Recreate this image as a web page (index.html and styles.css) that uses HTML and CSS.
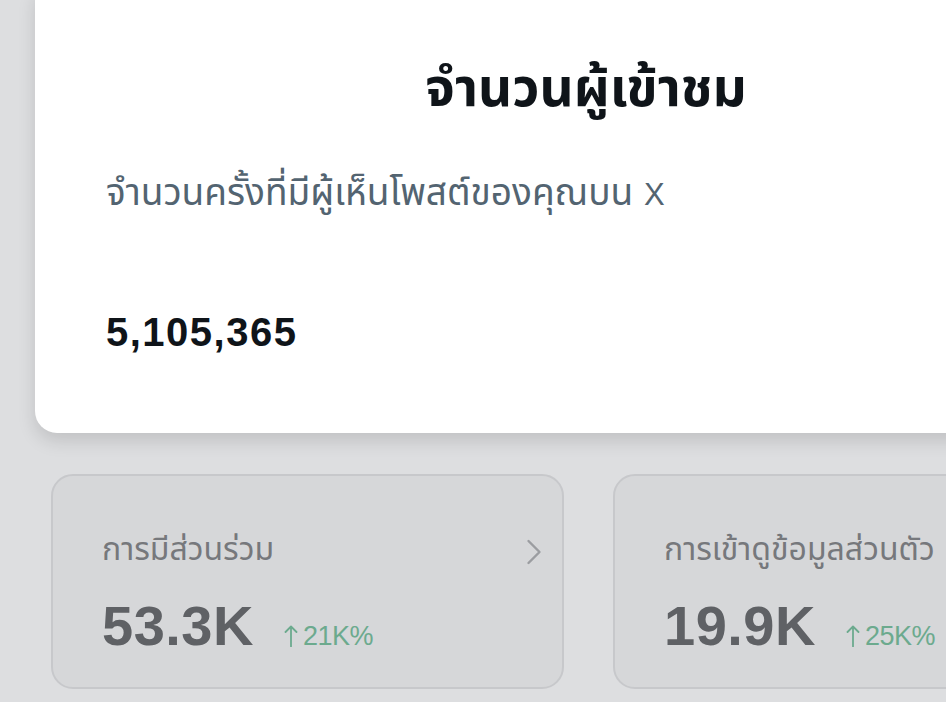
FILE: index.html
```html
<!DOCTYPE html>
<html lang="th">
<head>
<meta charset="utf-8">
<link rel="stylesheet" href="styles.css">
</head>
<body>
<div class="page">
  <section class="hero">
    <h1 class="hero-title">จำนวนผู้เข้าชม</h1>
    <p class="hero-sub">จำนวนครั้งที่มีผู้เห็นโพสต์ของคุณบน <span class="latin">X</span></p>
    <div class="hero-num">5,105,365</div>
  </section>
  <div class="stats">
    <div class="stat">
      <div class="stat-head">
        <span class="stat-label">การมีส่วนร่วม</span>
        <svg class="chev" width="16" height="26" viewBox="0 0 16 26"><path d="M2.5 2 L13.5 13 L2.5 24" fill="none" stroke="#9b9da1" stroke-width="2.4" stroke-linecap="round" stroke-linejoin="round"/></svg>
      </div>
      <div class="stat-row">
        <span class="stat-value">53.3K</span>
        <span class="stat-delta"><svg class="arrow" width="14" height="22" viewBox="0 0 14 22"><path d="M7 21.5 L7 1.5 M1.5 7 L7 1.5 L12.5 7" fill="none" stroke="#6caa8e" stroke-width="1.8" stroke-linecap="round" stroke-linejoin="round"/></svg>21K%</span>
      </div>
    </div>
    <div class="stat">
      <div class="stat-head">
        <span class="stat-label">การเข้าดูข้อมูลส่วนตัว</span>
      </div>
      <div class="stat-row">
        <span class="stat-value">19.9K</span>
        <span class="stat-delta"><svg class="arrow" width="14" height="22" viewBox="0 0 14 22"><path d="M7 21.5 L7 1.5 M1.5 7 L7 1.5 L12.5 7" fill="none" stroke="#6caa8e" stroke-width="1.8" stroke-linecap="round" stroke-linejoin="round"/></svg>25K%</span>
      </div>
    </div>
  </div>
</div>
</body>
</html>
```
FILE: styles.css
```css
html, body {
  margin: 0;
  padding: 0;
  width: 946px;
  height: 702px;
  overflow: hidden;
  background: #dddee0;
  font-family: "Liberation Sans", "Noto Sans Thai", sans-serif;
}
.page {
  padding-left: 35px;
}
.hero {
  width: 1102px;
  margin-top: -20px;
  height: 453px;
  box-sizing: border-box;
  background: #ffffff;
  border-radius: 22px;
  box-shadow: 0 8px 18px rgba(0, 0, 0, 0.13);
  padding: 75px 0 0 71px;
}
.hero-title {
  margin: 0;
  font-family: "Noto Sans Thai", "Liberation Sans", sans-serif;
  font-size: 53px;
  font-weight: 700;
  color: #0f1419;
  text-align: center;
  padding-right: 71px;
  line-height: 70px;
}
.hero-sub {
  margin: 44px 0 0;
  font-family: "Noto Sans Thai", "Liberation Sans", sans-serif;
  font-size: 37px;
  color: #536471;
  line-height: 50px;
  white-space: nowrap;
}
.latin {
  font-family: "Liberation Sans", sans-serif;
  font-size: 31px;
  margin-left: 1px;
}
.hero-num {
  margin-top: 90px;
  font-size: 40px;
  font-weight: 700;
  letter-spacing: 1.5px;
  color: #0f1419;
  line-height: 44px;
}
.stats {
  display: flex;
  gap: 49px;
  margin: 41px 0 0 16px;
}
.stat {
  flex: 0 0 513px;
  height: 215px;
  box-sizing: border-box;
  border: 2px solid #c7c8cb;
  border-radius: 22px;
  background: #d6d7d9;
  padding: 52px 20px 0 49px;
}
.stat-head {
  display: flex;
  justify-content: space-between;
  align-items: center;
  height: 44px;
}
.stat-label {
  font-family: "Noto Sans Thai", "Liberation Sans", sans-serif;
  font-size: 32px;
  color: #76787c;
  white-space: nowrap;
}
.chev {
  display: block;
  margin-top: 4px;
}
.stat-row {
  display: flex;
  align-items: baseline;
  margin-top: 24px;
}
.stat-value {
  font-size: 56px;
  font-weight: 700;
  letter-spacing: 0.5px;
  color: #5f6165;
  line-height: 60px;
}
.stat-delta {
  margin-left: 30px;
  font-size: 27px;
  color: #6caa8e;
  letter-spacing: -0.5px;
}
.arrow {
  display: inline-block;
  vertical-align: -2px;
  margin-right: 5px;
}
```
